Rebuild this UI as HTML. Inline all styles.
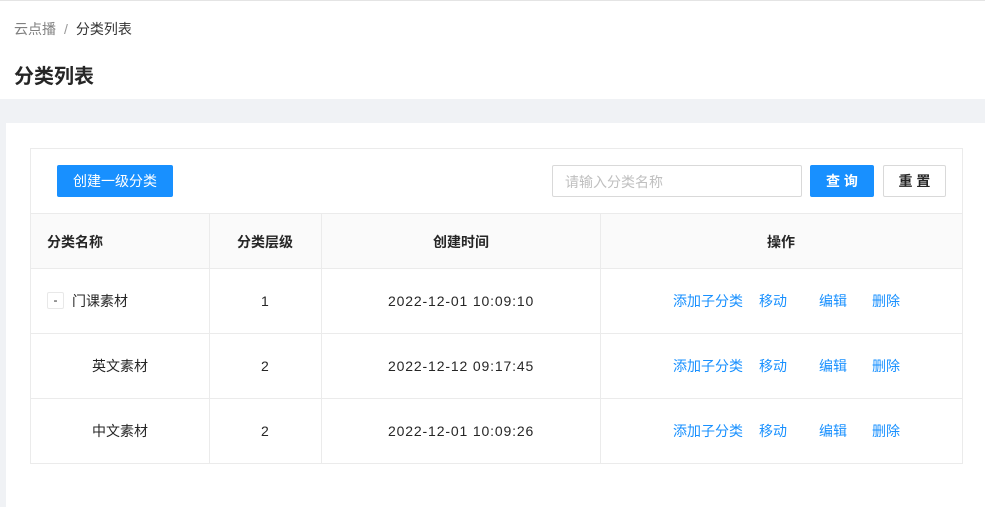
<!DOCTYPE html>
<html><head><meta charset="utf-8"><style>
*{margin:0;padding:0;box-sizing:border-box}
body{width:985px;height:507px;overflow:hidden;background:#f0f2f5;font-family:"Liberation Sans","Noto Sans CJK SC",sans-serif;color:#262626;position:relative}
.hdr{position:absolute;left:0;top:0;width:985px;height:99px;background:#fff;border-top:1px solid #e4e4e4}
.bc{position:absolute;left:14px;top:19px;font-size:14px;color:#333}
.bc .g{color:#808080}
.bc .s{color:#999;margin:0 8px}
.title{position:absolute;left:14px;top:60px;font-size:20px;font-weight:bold;color:#262626}
.panel{position:absolute;left:6px;top:123px;width:979px;height:384px;background:#fff}
.card{position:absolute;left:30px;top:148px;width:933px;height:316px;border:1px solid #ebebeb}
.btn{position:absolute;height:32px;border-radius:2px;font-size:14px;display:flex;align-items:center;justify-content:center}
.pri{background:#1890ff;color:#fff}
.def{background:#fff;border:1px solid #d9d9d9;color:#262626}
.inp{position:absolute;left:552px;top:165px;width:250px;height:32px;border:1px solid #d9d9d9;border-radius:2px;font-size:14px;color:#bfbfbf;padding:6px 12px}
.row{position:absolute;left:31px;width:931px;border-top:1px solid #ebebeb;font-size:14px}
.c{position:absolute;top:0;height:100%;border-left:1px solid #ebebeb}
.t{position:absolute;font-size:14px;white-space:nowrap}
.n{margin-top:2px;letter-spacing:0.85px}
.a{color:#1890ff}
.h{font-weight:bold}
</style></head><body>
<div class="hdr"></div>
<div class="bc"><span class="g">云点播</span><span class="s">/</span>分类列表</div>
<div class="title">分类列表</div>
<div class="panel"></div>
<div class="card"></div>
<div class="btn pri" style="left:57px;top:165px;width:116px">创建一级分类</div>
<div class="inp">请输入分类名称</div>
<div class="btn pri" style="left:810px;top:165px;width:64px;font-weight:bold">查 询</div>
<div class="btn def" style="left:883px;top:165px;width:63px;font-weight:bold">重 置</div>
<div class="row" style="top:213px;height:55px;background:#fafafa"></div>
<div class="row" style="top:268px;height:65px"></div>
<div class="row" style="top:333px;height:65px"></div>
<div class="row" style="top:398px;height:66px;border-bottom:1px solid #ebebeb"></div>
<div class="c" style="left:209px;top:213px;height:251px"></div>
<div class="c" style="left:321px;top:213px;height:251px"></div>
<div class="c" style="left:600px;top:213px;height:251px"></div>
<div class="t h" style="left:47px;top:232px">分类名称</div>
<div class="t h" style="left:237px;top:232px">分类层级</div>
<div class="t h" style="left:433px;top:232px">创建时间</div>
<div class="t h" style="left:767px;top:232px">操作</div>
<div style="position:absolute;left:47px;top:292px;width:17px;height:17px;border:1px solid #e8e8e8;border-radius:2px;font-size:12px;text-align:center;line-height:14px">-</div>
<div class="t" style="left:72px;top:291px">门课素材</div>
<div class="t" style="left:92px;top:356px">英文素材</div>
<div class="t" style="left:92px;top:421px">中文素材</div>
<div class="t n" style="left:261px;top:291px">1</div>
<div class="t n" style="left:261px;top:356px">2</div>
<div class="t n" style="left:261px;top:421px">2</div>
<div class="t n" style="left:388px;top:291px">2022-12-01 10:09:10</div>
<div class="t n" style="left:388px;top:356px">2022-12-12 09:17:45</div>
<div class="t n" style="left:388px;top:421px">2022-12-01 10:09:26</div>
<div class="t a" style="left:673px;top:291px">添加子分类</div><div class="t a" style="left:759px;top:291px">移动</div><div class="t a" style="left:819px;top:291px">编辑</div><div class="t a" style="left:872px;top:291px">删除</div>
<div class="t a" style="left:673px;top:356px">添加子分类</div><div class="t a" style="left:759px;top:356px">移动</div><div class="t a" style="left:819px;top:356px">编辑</div><div class="t a" style="left:872px;top:356px">删除</div>
<div class="t a" style="left:673px;top:421px">添加子分类</div><div class="t a" style="left:759px;top:421px">移动</div><div class="t a" style="left:819px;top:421px">编辑</div><div class="t a" style="left:872px;top:421px">删除</div>
</body></html>
